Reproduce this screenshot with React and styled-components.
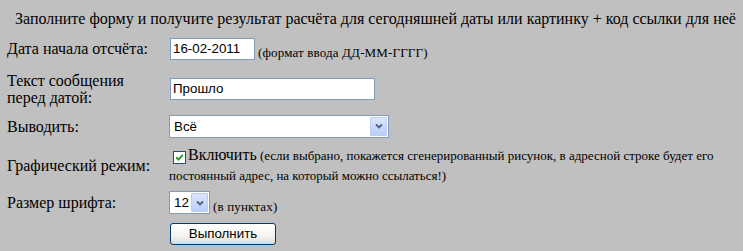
import React from "react";
import styled, { createGlobalStyle } from "styled-components";

const Global = createGlobalStyle`
  html, body { margin: 0; padding: 0; background: #c0c0c0; }
  body { font-family: "Liberation Serif", "Times New Roman", serif; color: #000; }
`;

const Page = styled.div`
  width: 743px;
  height: 251px;
  box-sizing: border-box;
  padding: 10px 8px 0 7px;
  overflow: hidden;
`;

const Header = styled.div`
  padding-left: 8px;
  font-size: 16px;
  line-height: 18px;
  white-space: nowrap;
`;

const Form = styled.div`
  display: grid;
  grid-template-columns: 162px 1fr;
  grid-template-rows: 41px 39px 36px 42px 33px 29px;
  align-items: center;
`;

const Label = styled.div`
  font-size: 16px;
  line-height: 17px;
  width: 150px;
`;

const Field = styled.div`
  display: flex;
  align-items: flex-end;
  gap: ${(p) => p.$gap ?? 3}px;
`;

const TextInput = styled.input`
  box-sizing: border-box;
  width: ${(p) => p.$w}px;
  height: 22px;
  margin: 0 0 0 1px;
  padding: 1px 2px;
  border: 1px solid #7f9db9;
  background: #fff;
  font-family: "Liberation Sans", Arial, sans-serif;
  font-size: 13.33px;
  color: #000;
  outline: none;
`;

const Note = styled.span`
  font-size: 13px;
  line-height: 15px;
  white-space: nowrap;
  letter-spacing: 0.15px;
`;

const SelectBox = styled.div`
  box-sizing: border-box;
  width: ${(p) => p.$w}px;
  height: 23px;
  border: 1px solid #7f9db9;
  background: #fff;
  display: flex;
  align-items: center;
  padding: 1px 1px 1px 4px;
  font-family: "Liberation Sans", Arial, sans-serif;
  font-size: 13.33px;
`;

const SelectValue = styled.span`
  flex: 1;
`;

const ArrowBtn = styled.span`
  box-sizing: border-box;
  width: 17px;
  height: 19px;
  border: 1px solid #bccdf5;
  border-radius: 1px;
  background: linear-gradient(#dbe5fd, #bccdf7);
  display: flex;
  align-items: center;
  justify-content: center;
`;

const Chevron = () => (
  <svg width="8" height="6" viewBox="0 0 8 6">
    <path d="M1 1.5 L4 4.5 L7 1.5" fill="none" stroke="#4d6185" strokeWidth="1.8" />
  </svg>
);

const Select = ({ w, value }) => (
  <SelectBox $w={w}>
    <SelectValue>{value}</SelectValue>
    <ArrowBtn>
      <Chevron />
    </ArrowBtn>
  </SelectBox>
);

const GraphicCell = styled.div`
  line-height: 20px;
  font-size: 13px;
  padding-right: 4px;
`;

const Check = styled.span`
  display: inline-flex;
  align-items: center;
  justify-content: center;
  box-sizing: border-box;
  width: 13px;
  height: 13px;
  margin: 0 2px 0 4px;
  border: 1px solid #1c5180;
  background: #fff;
  vertical-align: -2px;
`;

const Big = styled.span`
  font-size: 16px;
`;

const Button = styled.button`
  box-sizing: border-box;
  width: 106px;
  height: 22px;
  margin: 0 0 0 1px;
  padding: 0;
  border: 1px solid #003c74;
  border-radius: 3px;
  background: linear-gradient(#ffffff 0%, #f5f4ee 60%, #dcdad0 100%);
  font-family: "Liberation Sans", Arial, sans-serif;
  font-size: 13.33px;
  color: #000;
`;

export default function App() {
  return (
    <>
      <Global />
      <Page>
        <Header>
          Заполните форму и получите результат расчёта для сегодняшней даты или картинку + код ссылки для неё
        </Header>
        <Form>
          <Label>Дата начала отсчёта:</Label>
          <Field>
            <TextInput $w={85} defaultValue="16-02-2011" />
            <Note>(формат ввода ДД-ММ-ГГГГ)</Note>
          </Field>

          <Label>Текст сообщения перед датой:</Label>
          <Field>
            <TextInput $w={205} defaultValue="Прошло" />
          </Field>

          <Label>Выводить:</Label>
          <Field>
            <Select w={220} value="Всё" />
          </Field>

          <Label>Графический режим:</Label>
          <GraphicCell>
            <Check>
              <svg width="9" height="9" viewBox="0 0 9 9">
                <path d="M1.2 4.2 L3.5 6.6 L7.8 1.8" fill="none" stroke="#21a121" strokeWidth="2" />
              </svg>
            </Check>
            <Big>Включить</Big> (если выбрано, покажется сгенерированный рисунок, в адресной строке будет его
            постоянный адрес, на который можно ссылаться!)
          </GraphicCell>

          <Label>Размер шрифта:</Label>
          <Field>
            <Select w={41} value="12" />
            <Note>(в пунктах)</Note>
          </Field>

          <span />
          <Field>
            <Button>Выполнить</Button>
          </Field>
        </Form>
      </Page>
    </>
  );
}
